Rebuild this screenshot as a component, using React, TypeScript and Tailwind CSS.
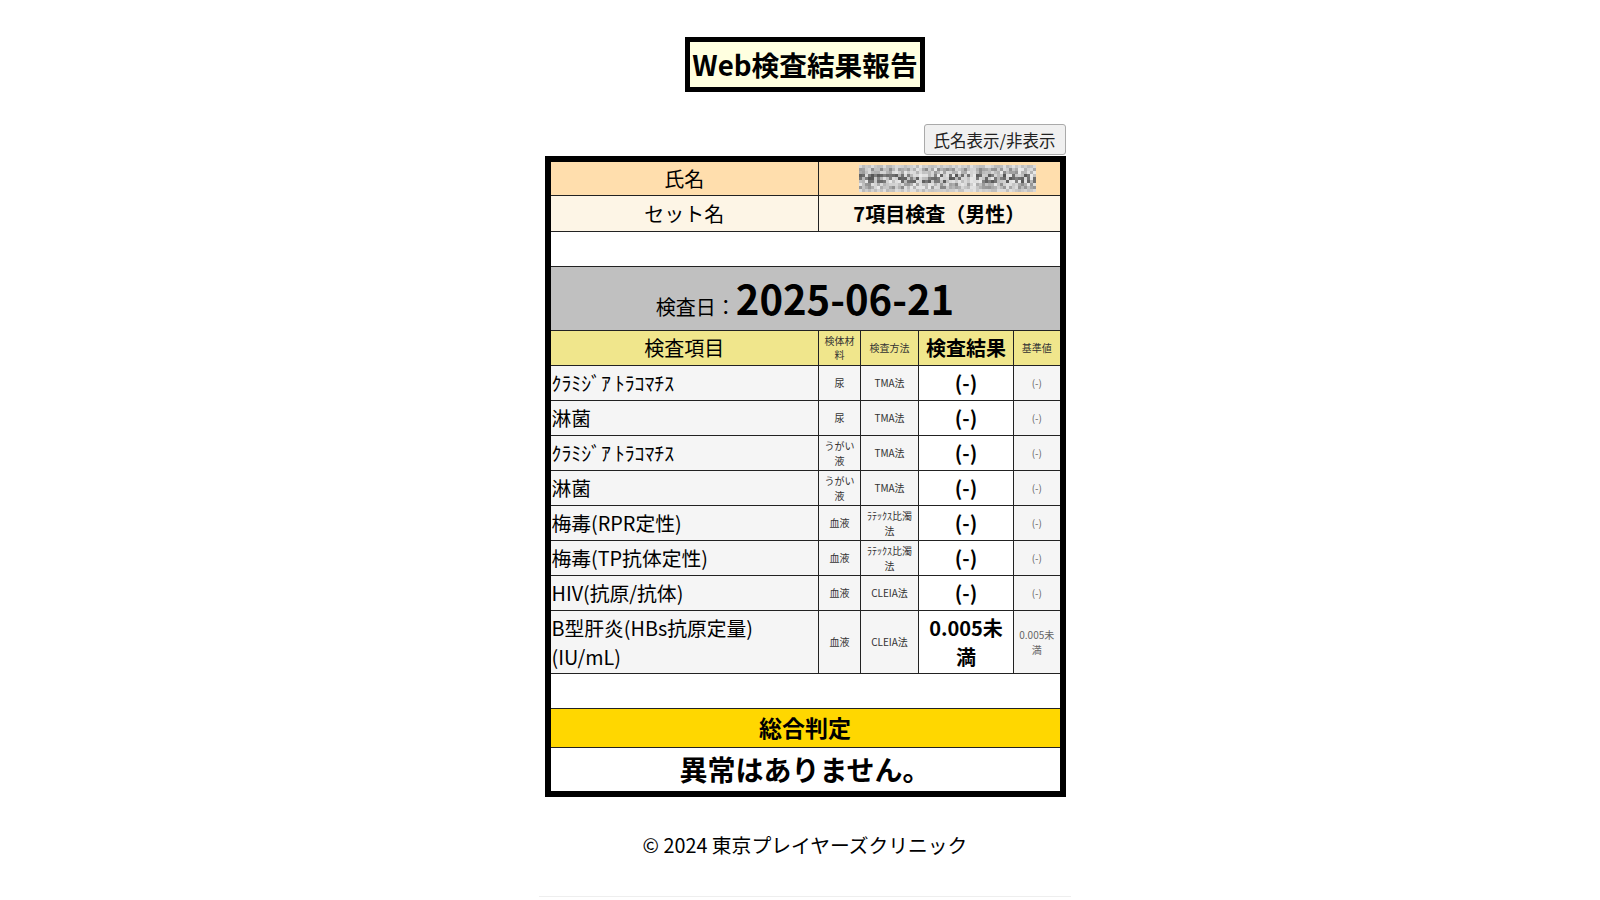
import React from 'react';

const font = "font-['Noto_Sans_CJK_JP','Noto_Sans',sans-serif]";

type Row = { name: string; mat: string; method: string; result: string; ref: string };

const rows: Row[] = [
    { name: 'ｸﾗﾐｼﾞｱ\u2009ﾄﾗｺﾏﾁｽ', mat: '尿', method: 'TMA法', result: '(-)', ref: '(-)' },
    { name: '淋菌', mat: '尿', method: 'TMA法', result: '(-)', ref: '(-)' },
    { name: 'ｸﾗﾐｼﾞｱ\u2009ﾄﾗｺﾏﾁｽ', mat: 'うがい液', method: 'TMA法', result: '(-)', ref: '(-)' },
    { name: '淋菌', mat: 'うがい液', method: 'TMA法', result: '(-)', ref: '(-)' },
    { name: '梅毒(RPR定性)', mat: '血液', method: 'ﾗﾃｯｸｽ比濁法', result: '(-)', ref: '(-)' },
    { name: '梅毒(TP抗体定性)', mat: '血液', method: 'ﾗﾃｯｸｽ比濁法', result: '(-)', ref: '(-)' },
    { name: 'HIV(抗原/抗体)', mat: '血液', method: 'CLEIA法', result: '(-)', ref: '(-)' },
    { name: 'B型肝炎(HBs抗原定量)(IU/mL)', mat: '血液', method: 'CLEIA法', result: '0.005未満', ref: '0.005未満' },
];

// the name is pixelated in the picture
const Mosaic = () => {
    const cells = [];
    let seed = 11;
    for (let y = 0; y < 9; y++) {
        for (let x = 0; x < 59; x++) {
            seed = (seed * 1103515245 + 12345) & 0x7fffffff;
            const noise = (seed >> 8) % 100;
            const edge = y === 0 || y === 8;
            const gap = x === 20 || x === 37 || x === 38;
            let v = 135 + noise;
            if (edge) v = 185 + noise * 0.4;
            if (gap) v = 205 + noise * 0.3;
            if (!edge && !gap && y >= 3 && y <= 5 && noise < 45) v = 85 + noise;
            cells.push(<rect key={`${x}-${y}`} x={x * 3} y={y * 3} width={3} height={3} fill={`rgb(${v},${v},${v})`} />);
        }
    }
    return (
        <svg width={177} height={27} viewBox="0 0 177 27" className="ml-[40px] block">
            {cells}
        </svg>
    );
};

export default function App() {
    return (
        <div className={`${font} min-h-[900px] bg-white pl-[10px] text-black`}>
            <div className="mx-auto w-[532px] border-b border-[#eeeeee] pb-[36px] pt-[37px]">
                <div className="flex justify-center">
                    <h1 className="border-[5px] border-black bg-[#ffffe0] px-[2px] text-[27.7px] font-bold leading-[45px]">
                        Web検査結果報告
                    </h1>
                </div>
                <div className="mx-auto mt-[32px] w-[521px]">
                    <div className="flex justify-end">
                        <button className="h-[31px] rounded-[3px] border border-[#aaaaaa] bg-[#f0f0f0] px-[9px] pt-[2px] text-[16.5px] leading-none text-[#222222]">
                            氏名表示/非表示
                        </button>
                    </div>
                    <table className="mt-[1px] w-full table-fixed border-collapse border-[6px] border-black text-center">
                        <colgroup>
                            <col className="w-[271px]" />
                            <col className="w-[42px]" />
                            <col className="w-[58px]" />
                            <col className="w-[95px]" />
                            <col />
                        </colgroup>
                        <tbody className="[&_td]:border [&_td]:border-[#222222]">
                            <tr className="h-[36px] bg-[#ffdead] text-[20px]">
                                <td className="pt-[2px]">氏名</td>
                                <td colSpan={4}><Mosaic /></td>
                            </tr>
                            <tr className="h-[36px] bg-[#fdf5e6] text-[20px]">
                                <td className="pt-[2px]">セット名</td>
                                <td colSpan={4} className="pt-[2px] font-bold">7項目検査（男性）</td>
                            </tr>
                            <tr className="h-[35px]"><td colSpan={5}></td></tr>
                            <tr className="h-[64px] bg-[#c0c0c0]">
                                <td colSpan={5} className="text-[20px]">
                                    検査日：<span className="text-[40px] font-bold leading-[50px]">2025-06-21</span>
                                </td>
                            </tr>
                            <tr className="h-[35px] bg-[#f0e68c]">
                                <td className="pt-[1px] text-[20px]">検査項目</td>
                                <td className="px-[3px] text-[10px] leading-[14px] text-[#333333]">検体材料</td>
                                <td className="text-[10px] text-[#333333]">検査方法</td>
                                <td className="pt-[1px] text-[20px] font-bold">検査結果</td>
                                <td className="text-[10px] text-[#333333]">基準値</td>
                            </tr>
                            {rows.map((r, i) => (
                                <tr key={i} className="h-[35px] bg-[#f5f5f5]">
                                    <td className="px-[1px] text-left text-[19.8px] leading-[29px]">{r.name}</td>
                                    <td className="px-[4px] text-[10px] leading-[15px] text-[#333333]">{r.mat}</td>
                                    <td className="px-[2px] text-[10px] leading-[15px] text-[#333333]">{r.method}</td>
                                    <td className="bg-white px-[6px] py-[2px] text-[20px] font-bold leading-[29px]">{r.result}</td>
                                    <td className="px-[4px] text-[10px] leading-[15px] text-[#666666]">{r.ref}</td>
                                </tr>
                            ))}
                            <tr className="h-[35px]"><td colSpan={5}></td></tr>
                            <tr className="h-[39px] bg-[#ffd700]">
                                <td colSpan={5} className="text-[23px] font-bold">総合判定</td>
                            </tr>
                            <tr className="h-[47px]">
                                <td colSpan={5} className="text-[28px] font-bold">異常はありません。</td>
                            </tr>
                        </tbody>
                    </table>
                </div>
                <p className="mt-[33px] text-center text-[19.8px]">© 2024 東京プレイヤーズクリニック</p>
            </div>
        </div>
    );
}
